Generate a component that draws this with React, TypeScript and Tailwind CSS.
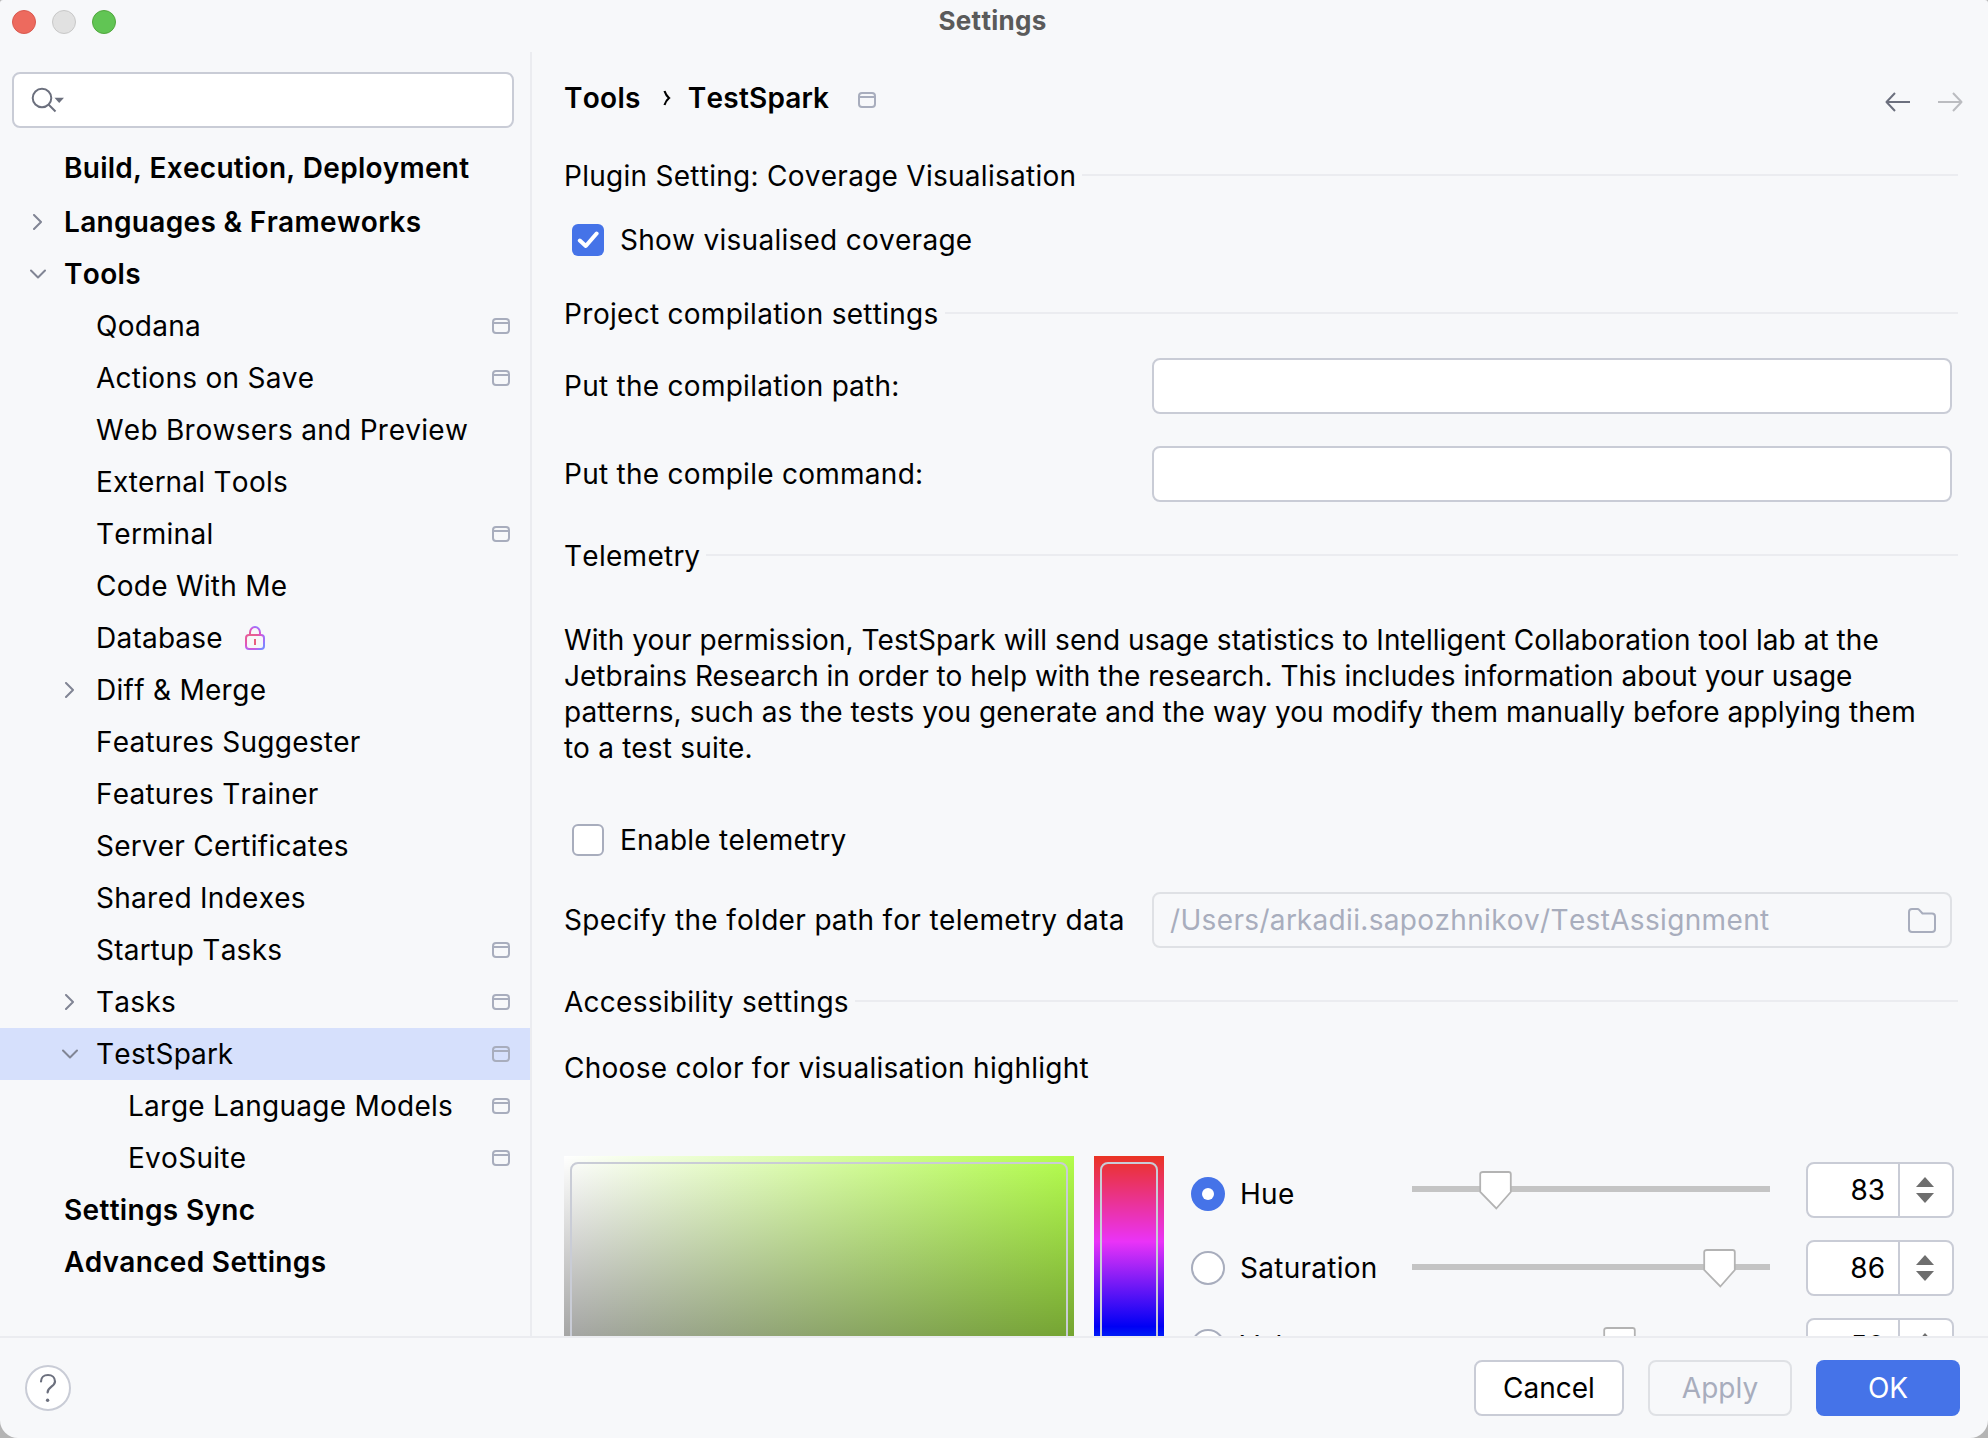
import React from "react";

const BORDER = "border-[#c9ccd6]";

function ProjectIcon() {
  return (
    <svg width="18" height="16" viewBox="0 0 18 16" fill="none" stroke="#a8adbd" strokeWidth="2" className="shrink-0">
      <rect x="1" y="1" width="16" height="14" rx="3" />
      <path d="M1 5H17" />
    </svg>
  );
}

function ChevronRight() {
  return (
    <svg width="16" height="16" viewBox="0 0 16 16" fill="none" stroke="#818594" strokeWidth="2" strokeLinecap="round" strokeLinejoin="round">
      <path d="M4 1L11 8L4 15" />
    </svg>
  );
}

function ChevronDown() {
  return (
    <svg width="16" height="16" viewBox="0 0 16 16" fill="none" stroke="#818594" strokeWidth="2" strokeLinecap="round" strokeLinejoin="round">
      <path d="M1 4.5L8 11.5L15 4.5" />
    </svg>
  );
}

function LockIcon() {
  return (
    <svg width="20" height="24" viewBox="0 0 20 24" fill="none" className="ml-[22px]">
      <defs>
        <radialGradient id="lock" cx="7" cy="12.5" r="13.5" gradientUnits="userSpaceOnUse">
          <stop offset="0" stopColor="#ec6a80" />
          <stop offset="0.45" stopColor="#e65a9c" />
          <stop offset="0.72" stopColor="#d955cf" />
          <stop offset="0.88" stopColor="#a86bf8" />
          <stop offset="1" stopColor="#7c88ff" />
        </radialGradient>
      </defs>
      <rect x="1" y="9" width="18" height="14" rx="3" stroke="url(#lock)" strokeWidth="2" />
      <path d="M5 9V6.5A5 5.5 0 0 1 15 6.5V9" stroke="url(#lock)" strokeWidth="2" />
      <path d="M10 13V19" stroke="#e8607f" strokeWidth="2" />
    </svg>
  );
}

type Item = {
  label: string;
  level: 0 | 1 | 2;
  arrow?: "right" | "down";
  project?: boolean;
  lock?: boolean;
  selected?: boolean;
};

const items: Item[] = [
  { label: "Languages & Frameworks", level: 0, arrow: "right" },
  { label: "Tools", level: 0, arrow: "down" },
  { label: "Qodana", level: 1, project: true },
  { label: "Actions on Save", level: 1, project: true },
  { label: "Web Browsers and Preview", level: 1 },
  { label: "External Tools", level: 1 },
  { label: "Terminal", level: 1, project: true },
  { label: "Code With Me", level: 1 },
  { label: "Database", level: 1, lock: true },
  { label: "Diff & Merge", level: 1, arrow: "right" },
  { label: "Features Suggester", level: 1 },
  { label: "Features Trainer", level: 1 },
  { label: "Server Certificates", level: 1 },
  { label: "Shared Indexes", level: 1 },
  { label: "Startup Tasks", level: 1, project: true },
  { label: "Tasks", level: 1, arrow: "right", project: true },
  { label: "TestSpark", level: 1, arrow: "down", project: true, selected: true },
  { label: "Large Language Models", level: 2, project: true },
  { label: "EvoSuite", level: 2, project: true },
  { label: "Settings Sync", level: 0 },
  { label: "Advanced Settings", level: 0 },
];

const indent = ["pl-[30px]", "pl-[62px]", "pl-[94px]"];

function Row({ item }: { item: Item }) {
  return (
    <div className={`flex h-[52px] items-center pr-5 ${indent[item.level]} ${item.selected ? "bg-[#d6e0fc]" : ""}`}>
      <div className="w-[34px] shrink-0">
        {item.arrow === "right" && <ChevronRight />}
        {item.arrow === "down" && <ChevronDown />}
      </div>
      <span className={item.level === 0 ? "font-semibold tracking-[0.33px]" : ""}>{item.label}</span>
      {item.lock && <LockIcon />}
      <div className="flex-1" />
      {item.project && <ProjectIcon />}
    </div>
  );
}

function Sidebar() {
  return (
    <div className="flex w-[532px] shrink-0 flex-col border-r-2 border-[#ebecf0] pt-5">
      <div className={`ml-3 flex h-14 w-[502px] items-center rounded-lg border-2 bg-white ${BORDER}`}>
        <svg width="34" height="26" viewBox="0 0 34 26" className="ml-[17px]" fill="none">
          <circle cx="11" cy="11" r="9.3" stroke="#6c707e" strokeWidth="2" />
          <path d="M17.5 17.5L24.5 24.5" stroke="#6c707e" strokeWidth="2" />
          <path d="M23.5 10.8H33L28.2 16Z" fill="#6c707e" />
        </svg>
      </div>
      <div className="mt-[14px] mb-0.5 flex h-[52px] items-center pl-16 font-semibold">Build, Execution, Deployment</div>
      {items.map((item) => (
        <Row key={item.label} item={item} />
      ))}
    </div>
  );
}

function Section({ title, className }: { title: string; className: string }) {
  return (
    <div className={`flex h-9 items-center gap-1.5 ${className}`}>
      <span>{title}</span>
      <div className="mb-0.5 mr-[30px] h-0.5 flex-1 bg-[#ebecf0]" />
    </div>
  );
}

function Field({ label, className, children }: { label: string; className: string; children?: React.ReactNode }) {
  return (
    <div className={`flex h-14 items-center ${className}`}>
      <span className="w-[588px]">{label}</span>
      {children ?? <div className={`h-14 w-[800px] rounded-lg border-2 bg-white ${BORDER}`} />}
    </div>
  );
}

type Channel = { label: string; value: number; thumb: string; checked?: boolean; shift?: boolean };

const channels: Channel[] = [
  { label: "Hue", value: 83, thumb: "left-[67px]", checked: true, shift: true },
  { label: "Saturation", value: 86, thumb: "left-[291px]" },
  { label: "Value", value: 50, thumb: "left-[191px]" },
];

function ChannelRow({ c }: { c: Channel }) {
  return (
    <div className="flex h-14 items-center">
      <div className={`flex w-[221px] items-center gap-[15px] ${c.shift ? "pt-2" : ""}`}>
        {c.checked ? (
          <div className="flex size-[34px] items-center justify-center rounded-full bg-[#4573e8]">
            <div className="size-3 rounded-full bg-white" />
          </div>
        ) : (
          <div className="size-[34px] rounded-full border-2 border-[#a8adbd] bg-white" />
        )}
        <span>{c.label}</span>
      </div>
      <div className="relative -mt-0.5 h-1.5 w-[358px] bg-[#c4c4c4]">
        <svg width="34" height="40" viewBox="0 0 34 40" className={`absolute -top-4 ${c.thumb}`}>
          <path d="M4 2H29.5Q31.8 2 31.8 4V22L17.3 38.5L1.2 22V4Q1.2 2 4 2Z" fill="#fff" stroke="#b3b3b3" strokeWidth="1.8" />
        </svg>
      </div>
      <div className={`ml-9 flex h-14 w-[148px] rounded-lg border-2 bg-white ${BORDER}`}>
        <div className={`flex flex-1 items-center justify-end border-r-2 pr-[13px] tracking-normal ${BORDER}`}>{c.value}</div>
        <div className="flex w-[52px] items-center justify-center pr-0.5">
          <svg width="18" height="26" viewBox="0 0 18 26" fill="#6e6e6e">
            <path d="M9 0L18 10H0Z" />
            <path d="M9 26L18 16H0Z" />
          </svg>
        </div>
      </div>
    </div>
  );
}

function Main() {
  return (
    <div className="flex min-w-0 flex-1 flex-col overflow-hidden pl-8">
      <div className="flex h-[92px] shrink-0 items-center">
        <span className="font-semibold">Tools</span>
        <svg width="8" height="16" viewBox="0 0 8 16" fill="none" stroke="#000" strokeWidth="2.2" className="ml-[22px] mr-[17px]">
          <path d="M1.5 1Q3 5.5 6 8Q3 10.5 1.5 15" />
        </svg>
        <span className="font-semibold">TestSpark</span>
        <div className="ml-[29px] mt-1">
          <ProjectIcon />
        </div>
        <svg width="26" height="20" viewBox="0 0 26 20" fill="none" stroke="#6c707e" strokeWidth="2" strokeLinejoin="round" className="ml-auto mt-2">
          <path d="M10 1L1.5 10L10 19M1.5 10H25" />
        </svg>
        <svg width="26" height="20" viewBox="0 0 26 20" fill="none" stroke="#bbbcc0" strokeWidth="2" strokeLinejoin="round" className="ml-[26px] mr-[25px] mt-2">
          <path d="M16 1L24.5 10L16 19M24.5 10H1" />
        </svg>
      </div>

      <Section title="Plugin Setting: Coverage Visualisation" className="mt-[14px] shrink-0" />
      <div className="ml-2 mt-[30px] flex h-8 shrink-0 items-center gap-4">
        <div className="flex size-8 items-center justify-center rounded-md bg-[#4573e8]">
          <svg width="22" height="18" viewBox="0 0 22 18" fill="none" stroke="#fff" strokeWidth="4" strokeLinecap="round" strokeLinejoin="round">
            <path d="M2.8 9.5L8.8 15L19.6 2.5" />
          </svg>
        </div>
        <span>Show visualised coverage</span>
      </div>

      <Section title="Project compilation settings" className="mt-10 shrink-0" />
      <Field label="Put the compilation path:" className="mt-[26px] shrink-0" />
      <Field label="Put the compile command:" className="mt-8 shrink-0" />

      <Section title="Telemetry" className="mt-9 shrink-0" />
      <p className="mt-12 flex w-[1390px] shrink-0 flex-col leading-9 tracking-[0.06px] [font-kerning:normal]">
        <span>With your permission, TestSpark will send usage statistics to Intelligent Collaboration tool lab at the</span>
        <span className="tracking-[0.01px]">Jetbrains Research in order to help with the research. This includes information about your usage</span>
        <span>patterns, such as the tests you generate and the way you modify them manually before applying them</span>
        <span className="tracking-[0.2px]">to a test suite.</span>
      </p>
      <div className="ml-2 mt-[58px] flex h-8 shrink-0 items-center gap-4">
        <div className="size-8 rounded-md border-2 border-[#a8adbd] bg-white" />
        <span>Enable telemetry</span>
      </div>
      <Field label="Specify the folder path for telemetry data" className="mt-9 shrink-0 tracking-[0.34px]">
        <div className="flex h-14 w-[800px] items-center justify-between rounded-lg border-2 border-[#dfe1e5] pl-4 pr-[14px] text-[#a8adbd]">
          <span>/Users/arkadii.sapozhnikov/TestAssignment</span>
          <svg width="28" height="25" viewBox="0 0 28 25" fill="none" stroke="#a8adbd" strokeWidth="2" strokeLinejoin="round">
            <path d="M1 4Q1 1 4 1H9.5Q10.5 1 11.2 1.8L14.5 5.5H24Q27 5.5 27 8.5V21Q27 24 24 24H4Q1 24 1 21Z" />
          </svg>
        </div>
      </Field>

      <Section title="Accessibility settings" className="mt-9 shrink-0" />
      <div className="mt-[30px] flex h-9 shrink-0 items-center">Choose color for visualisation highlight</div>

      <div className="mt-[70px] flex h-[512px] shrink-0">
        <div className="w-[510px] bg-[linear-gradient(to_bottom,transparent,#000),linear-gradient(to_right,#fff,#b3fd4b)] p-1.5">
          <div className="h-full rounded-lg border-2 border-[#c9ccd6]" />
        </div>
        <div className="ml-5 w-[70px] bg-[linear-gradient(to_bottom,#ea3323,#ea33f7_16.7%,#0000f5_33.3%,#00fffe_50%,#00ff00_66.7%,#ffff00_83.3%,#ea3323)] p-1.5">
          <div className="h-full rounded-lg border-2 border-[#c9ccd6]" />
        </div>
        <div className="ml-[27px] flex flex-col gap-[22px] pt-1.5">
          {channels.map((c) => (
            <ChannelRow key={c.label} c={c} />
          ))}
        </div>
      </div>
    </div>
  );
}

function Footer() {
  return (
    <div className="flex h-[102px] shrink-0 items-center border-t-2 border-[#ebecf0] pl-[25px] pr-7 tracking-normal [font-kerning:normal]">
      <div className={`flex size-[46px] items-center justify-center rounded-full border-2 bg-white ${BORDER}`}>
        <svg width="18" height="30" viewBox="0 0 18 30" fill="none" stroke="#6c707e" strokeWidth="2.2" strokeLinecap="round">
          <path d="M2 8.5C2 4.5 5 2 9 2C13 2 16 4.5 16 8.5C16 13.5 8.6 14 8.6 19.4" />
          <circle cx="8.6" cy="27.2" r="1.7" fill="#6c707e" stroke="none" />
        </svg>
      </div>
      <div className="ml-auto flex gap-6">
        <div className={`flex h-14 w-[150px] items-center justify-center rounded-lg border-2 bg-white ${BORDER}`}>Cancel</div>
        <div className="flex h-14 w-36 items-center justify-center rounded-lg border-2 border-[#dfe1e5] text-[#a8adbd]">Apply</div>
        <div className="flex h-14 w-36 items-center justify-center rounded-lg bg-[#4573e8] text-white">OK</div>
      </div>
    </div>
  );
}

export default function App() {
  return (
    <div className="h-[1438px] w-[1988px] bg-[#b4b4b4]">
      <div className="flex h-full w-full flex-col overflow-hidden rounded-t-[3px] rounded-b-[18px] bg-[#f7f8fa] font-['Inter',sans-serif] text-[28px] leading-9 tracking-[0.27px] whitespace-nowrap text-black [font-kerning:none]">
        <div className="relative flex h-[52px] shrink-0 items-start gap-4 pl-3 pt-[10px]">
          <div className="size-6 rounded-full border border-[#d9594f] bg-[#ed6a5e]" />
          <div className="size-6 rounded-full border border-[#c8c8c8] bg-[#e1e1e1]" />
          <div className="size-6 rounded-full border border-[#51a73e] bg-[#61c554]" />
          <div className="absolute inset-x-0 top-[3px] pr-[3px] text-center text-[26px] font-bold text-[#5a5a5a]">Settings</div>
        </div>
        <div className="flex min-h-0 flex-1">
          <Sidebar />
          <Main />
        </div>
        <Footer />
      </div>
    </div>
  );
}
